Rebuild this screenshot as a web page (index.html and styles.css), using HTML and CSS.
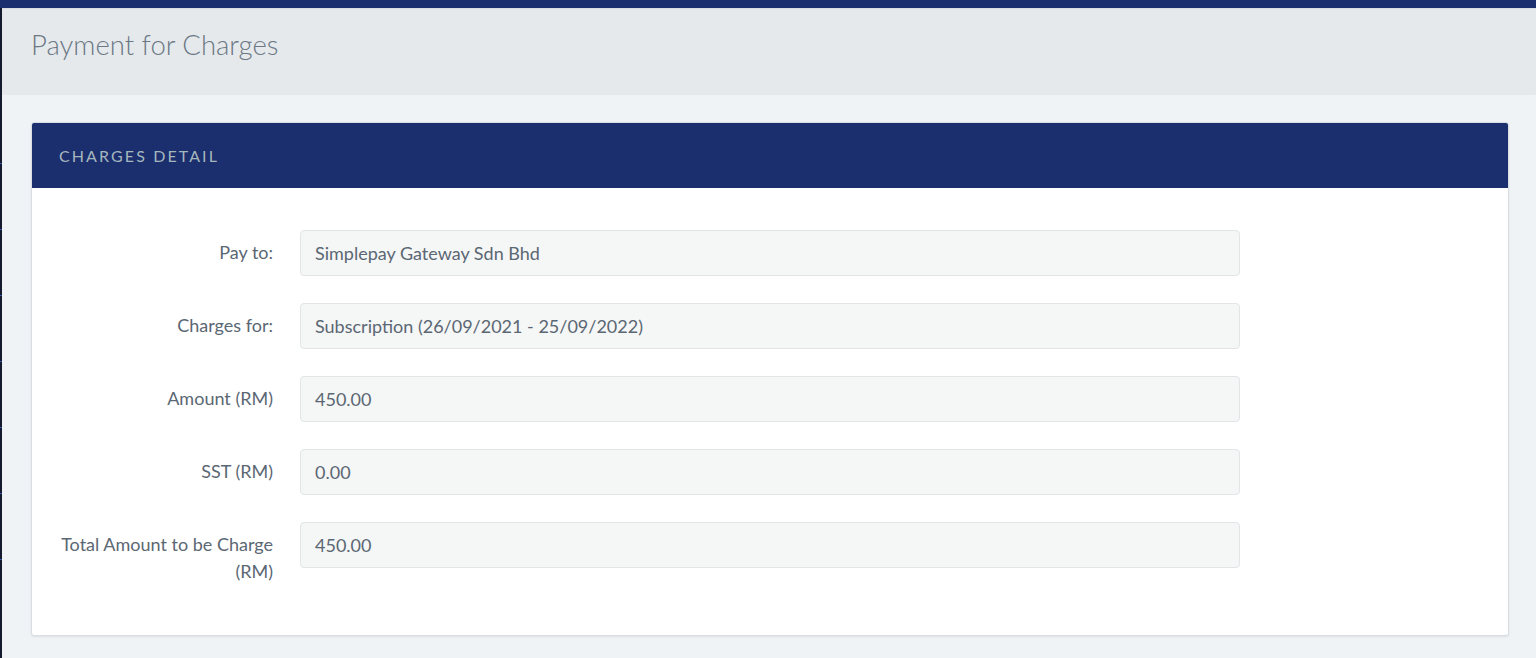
FILE: index.html
```html
<!DOCTYPE html>
<html lang="en">
<head>
    <meta charset="UTF-8">
    <meta name="viewport" content="width=device-width, initial-scale=1.0">
    <title>Payment for Charges</title>
    <link rel="stylesheet" href="styles.css">
</head>
<body>

    <!-- Top bar -->
    <div class="topbar"></div>

    <div class="wrapper">
        <!-- Sidebar edge -->
        <div class="side-edge">
            <span></span><span></span><span></span><span></span><span></span><span></span><span></span>
        </div>

        <div class="main">
            <!-- Page Title -->
            <div class="page-title">
                <h1>Payment for Charges</h1>
            </div>

            <!-- Main Content -->
            <div class="content">
                <div class="card">
                    <div class="card-header">CHARGES DETAIL</div>
                    <div class="card-body">
                        <div class="form-row">
                            <label>Pay to:</label>
                            <div class="field">Simplepay Gateway Sdn Bhd</div>
                        </div>
                        <div class="form-row">
                            <label>Charges for:</label>
                            <div class="field">Subscription (26/09/2021 - 25/09/2022)</div>
                        </div>
                        <div class="form-row">
                            <label>Amount (RM)</label>
                            <div class="field">450.00</div>
                        </div>
                        <div class="form-row">
                            <label>SST (RM)</label>
                            <div class="field">0.00</div>
                        </div>
                        <div class="form-row">
                            <label>Total Amount to be Charge (RM)</label>
                            <div class="field">450.00</div>
                        </div>
                    </div>
                </div>
            </div>
        </div>
    </div>

</body>
</html>
```

FILE: styles.css
```css
body {
    margin: 0;
    font-family: 'Lato', sans-serif;
    background-color: #f0f3f6;
    color: #5b6773;
    overflow: hidden;
}

.topbar {
    height: 8px;
    background-color: #1b2e6d;
}

.wrapper {
    display: flex;
    min-height: 650px;
}

/* Thin sidebar edge with small ticks */
.side-edge {
    width: 2px;
    background-color: #151b2e;
    display: flex;
    flex-direction: column;
    padding-top: 155px;
    gap: 65px;
}

.side-edge span {
    display: block;
    height: 1px;
    width: 2px;
    background-color: #3a56a8;
}

.main {
    flex: 1;
}

/* Page Title */
.page-title {
    background-color: #e5e9ec;
    height: 87px;
    padding: 0 29px;
    display: flex;
    align-items: center;
    box-shadow: inset 0 1px 1px rgba(0, 0, 0, 0.06);
}

.page-title h1 {
    margin: 0;
    font-size: 27.5px;
    font-weight: 300;
    color: #6b7884;
    margin-top: -14px;
}

.content {
    padding: 27px 27px 0 29px;
}

.card {
    background-color: white;
    border: 1px solid #d8dee3;
    border-radius: 3px;
    box-shadow: 0 1px 2px rgba(0, 0, 0, 0.08);
    overflow: hidden;
}

.card-header {
    background-color: #1b2e6d;
    height: 65px;
    padding-left: 27px;
    display: flex;
    align-items: center;
    font-size: 16px;
    letter-spacing: 2.1px;
    color: #a5b7bd;
}

.card-body {
    padding: 42px 0 50px 0;
}

.form-row {
    display: flex;
    align-items: flex-start;
    margin-bottom: 27px;
}

.form-row:last-child {
    margin-bottom: 0;
}

.form-row label {
    width: 216px;
    padding-left: 25px;
    flex-shrink: 0;
    text-align: right;
    font-size: 18px;
    line-height: 27px;
    padding-top: 9px;
    color: #5b6773;
}

.field {
    margin-left: 27px;
    width: 910px;
    height: 44px;
    line-height: 44px;
    padding: 0 14px;
    background-color: #f5f6f6;
    border: 1px solid #e1e5e7;
    border-radius: 4px;
    font-size: 18px;
    color: #5b6773;
}
```
